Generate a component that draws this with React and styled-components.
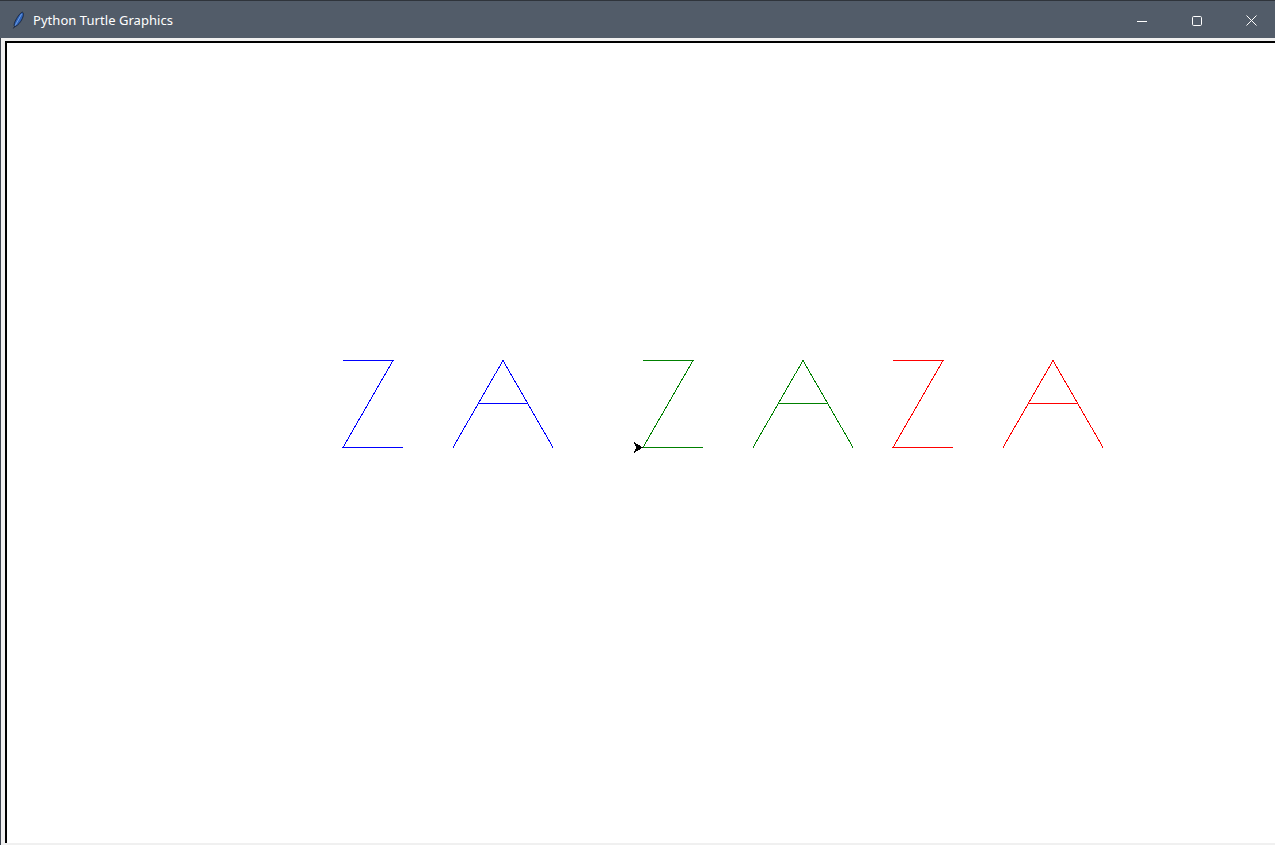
import React from 'react';
import styled, { createGlobalStyle } from 'styled-components';

const GlobalStyle = createGlobalStyle`
  html, body {
    margin: 0;
    padding: 0;
    overflow: hidden;
    background: #f0f0f0;
  }
`;

const Window = styled.div`
  width: 1275px;
  height: 845px;
  display: flex;
  flex-direction: column;
  font-family: "Noto Sans", "Open Sans", sans-serif;
`;

const TitleBar = styled.div`
  height: 37px;
  flex-shrink: 0;
  display: flex;
  align-items: center;
  background: #525c69;
  border-top: 1px solid #2f343b;
  color: #ffffff;
`;

const AppIcon = styled.svg`
  width: 14px;
  height: 18px;
  margin-left: 11px;
  margin-right: 8px;
  margin-top: 1px;
`;

const Title = styled.span`
  font-size: 13px;
  letter-spacing: 0.05px;
  flex: 1;
`;

const Controls = styled.div`
  display: flex;
  height: 100%;
`;

const ControlButton = styled.div`
  width: 55px;
  height: 100%;
  display: flex;
  align-items: center;
  justify-content: flex-end;
  padding-right: 18px;
  padding-top: 2px;
  box-sizing: border-box;
`;

const Frame = styled.div`
  flex: 1;
  display: flex;
  flex-direction: column;
  padding: 3px 0 2px 4px;
  background: #f0f0f0;
  border-left: 1px solid #3f4651;
  min-height: 0;
`;

const Canvas = styled.div`
  flex: 1;
  background: #ffffff;
  border-top: 2px solid #000000;
  border-left: 2px solid #000000;
  overflow: hidden;
  min-height: 0;
`;

const Drawing = styled.svg`
  display: block;
  width: 1268px;
  height: 800px;
`;

const letters = [
  { color: '#0000ff', z: 343, a: 503 },
  { color: '#008000', z: 643, a: 803 },
  { color: '#ff0000', z: 893, a: 1053 },
];

const Z = ({ x, color }) => (
  <polyline
    points={`${x},360.5 ${x + 50},360.5 ${x},447.5 ${x + 60},447.5`}
    fill="none"
    stroke={color}
    strokeWidth="1"
  />
);

const A = ({ x, color }) => (
  <g stroke={color} strokeWidth="1" fill="none">
    <polyline points={`${x - 50},447.5 ${x},360.5 ${x + 50},447.5`} />
    <line x1={x - 25} y1="403.5" x2={x + 25} y2="403.5" />
  </g>
);

const App = () => (
  <>
    <GlobalStyle />
    <Window>
      <TitleBar>
        <AppIcon viewBox="0 0 14 18">
          <path d="M11.5 1.2 C13.2 2.2 12.6 6 9.6 10.6 C7.6 13.6 5.4 15.2 3.6 15.6 C2.6 14.6 3.2 11.4 5.6 7.6 C7.6 4.2 10 1.2 11.5 1.2 Z" fill="#2f63b8" stroke="#16223a" strokeWidth="0.9" />
          <path d="M10.6 3 L4.2 14.6" stroke="#8db6f2" strokeWidth="0.7" />
          <path d="M3.6 15.6 L2.4 17.4" stroke="#16223a" strokeWidth="1" />
        </AppIcon>
        <Title>Python Turtle Graphics</Title>
        <Controls>
          <ControlButton>
            <svg width="10" height="10" viewBox="0 0 10 10">
              <line x1="0" y1="5.5" x2="10" y2="5.5" stroke="#ffffff" strokeWidth="1" />
            </svg>
          </ControlButton>
          <ControlButton>
            <svg width="10" height="10" viewBox="0 0 10 10">
              <rect x="0.5" y="0.5" width="9" height="9" rx="1.2" fill="none" stroke="#ffffff" strokeWidth="1" />
            </svg>
          </ControlButton>
          <ControlButton>
            <svg width="11" height="11" viewBox="0 0 11 11">
              <path d="M0.5 0.5 L10.5 10.5 M10.5 0.5 L0.5 10.5" stroke="#ffffff" strokeWidth="1" />
            </svg>
          </ControlButton>
        </Controls>
      </TitleBar>
      <Frame>
        <Canvas>
          <Drawing viewBox="7 43 1268 800" shapeRendering="crispEdges">
            {letters.map((l) => (
              <g key={l.color}>
                <Z x={l.z} color={l.color} />
                <A x={l.a} color={l.color} />
              </g>
            ))}
            <polygon points="643,447.5 633,441.5 636,447.5 633,453.5" fill="#000000" />
          </Drawing>
        </Canvas>
      </Frame>
    </Window>
  </>
);

export default App;
